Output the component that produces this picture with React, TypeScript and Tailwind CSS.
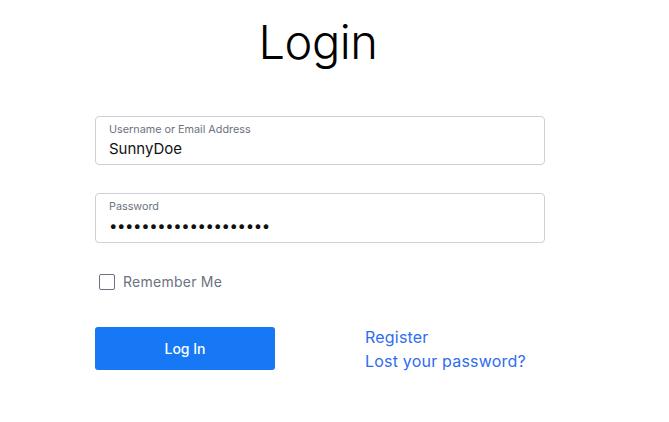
import React from "react";

export default function App() {
  return (
    <div className="min-h-[422px] w-[669px] bg-white" style={{ fontFamily: "Inter, 'Liberation Sans', sans-serif" }}>
      <div className="ml-[95px] w-[450px] pt-[18px]">
        <h1
          className="text-center text-[47px] leading-[48px] font-light tracking-[-0.5px] text-black pr-[4px]"
          style={{ fontFamily: "Inter, Lato, sans-serif" }}
        >
          Login
        </h1>

        <div className="mt-[50px] flex h-[49px] flex-col rounded-[4px] border border-[#cdd0d8] px-[13px] pt-[6px]">
          <span className="text-[10.8px] leading-[13px] text-[#6b7280]">Username or Email Address</span>
          <span className="mt-[4px] text-[15px] leading-[18px] text-[#111]">SunnyDoe</span>
        </div>

        <div className="mt-[28px] flex h-[50px] flex-col rounded-[4px] border border-[#cdd0d8] px-[13px] pt-[6px]">
          <span className="text-[10.8px] leading-[13px] text-[#6b7280]">Password</span>
          <span className="mt-[4px] text-[15px] leading-[18px] tracking-[-0.4px] text-[#111]">••••••••••••••••••••</span>
        </div>

        <div className="mt-[30px] flex items-center gap-[8px] pl-[4px]">
          <span className="h-[16px] w-[16px] rounded-[2px] border border-[#6b7280] bg-white" />
          <span className="text-[14px] leading-[18px] tracking-[0.25px] text-[#6b7280]">Remember Me</span>
        </div>

        <div className="mt-[36px] flex items-start">
          <button className="flex h-[43px] w-[180px] items-center justify-center rounded-[3px] bg-[#1678f5] text-[14px] font-medium text-white">
            Log In
          </button>
          <div className="ml-[90px] -mt-[2px] flex flex-col text-[16px] leading-[24px] tracking-[0.2px] text-[#2f6cf0]">
            <span>Register</span>
            <span>Lost your password?</span>
          </div>
        </div>
      </div>
    </div>
  );
}
